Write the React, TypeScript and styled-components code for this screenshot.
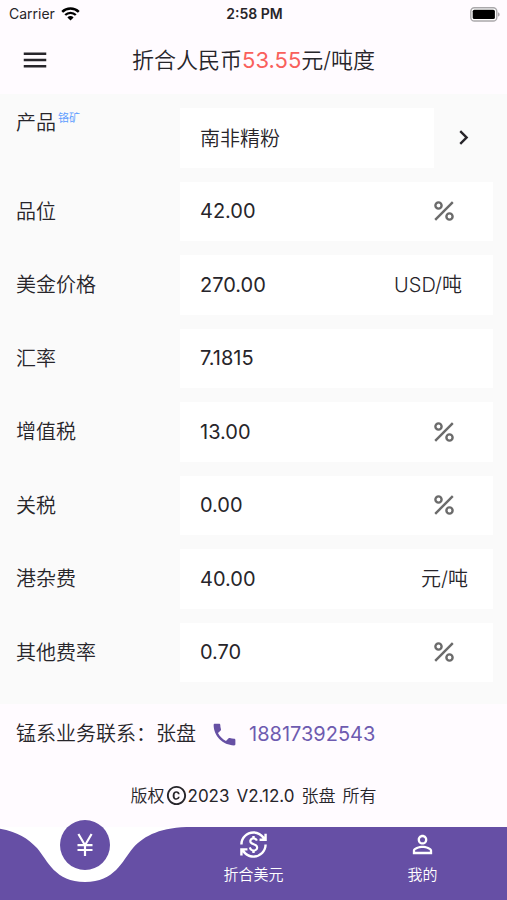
import React, { useState } from "react";
import styled, { createGlobalStyle } from "styled-components";
import {
  MdChevronRight,
  MdCopyright,
  MdCurrencyExchange,
  MdMenu,
  MdPersonOutline,
  MdPhone,
} from "react-icons/md";

const GlobalStyle = createGlobalStyle`
  *, *::before, *::after { box-sizing: border-box; }
  body {
    margin: 0;
    background: #fffbff;
    color: #27252a;
    font-family: Inter, "Noto Sans CJK SC", sans-serif;
    font-size: 20px;
    font-weight: 350;
    line-height: 28px;
  }
  button, input { font: inherit; color: inherit; }
  button { padding: 0; border: 0; background: none; cursor: pointer; }
`;

const Screen = styled.div`
  display: flex;
  flex-direction: column;
  min-height: 100vh;
`;

const StatusBar = styled.div`
  display: grid;
  grid-template-columns: 1fr auto 1fr;
  align-items: center;
  height: 26px;
  padding: 2px 7px 0 9px;
  font-family: Inter, sans-serif;
  font-size: 14px;
  font-weight: 400;
  line-height: 20px;
`;

const Carrier = styled.span`
  display: flex;
  align-items: center;
  gap: 6px;
`;

const Clock = styled.time`
  font-weight: 600;
`;

const BatteryIcon = styled.svg`
  justify-self: end;
`;

const AppBar = styled.header`
  display: grid;
  grid-template-columns: 48px 1fr 48px;
  align-items: center;
  height: 68px;
  padding: 0 11px;
`;

const IconButton = styled.button`
  display: flex;
  align-items: center;
  justify-content: center;
  height: 48px;
`;

const Title = styled.h1`
  margin: 0;
  font-size: 22px;
  font-weight: 350;
  line-height: 32px;
  text-align: center;
  white-space: nowrap;
`;

const Amount = styled.span`
  color: #f9605c;
  font-weight: 400;
`;

const Form = styled.form`
  flex: 1;
  display: grid;
  grid-auto-rows: 1fr;
  padding: 7px 14px 15px 16px;
  background: #fafafa;
`;

const Row = styled.div`
  display: grid;
  grid-template-columns: 164px 1fr;
  min-height: 60px;
  padding: 7px 0;
`;

const Label = styled.label<{ $top?: boolean }>`
  display: flex;
  align-self: ${(p) => (p.$top ? "start" : "center")};
  gap: 2px;
  padding-top: 1px;
`;

const Tag = styled.sup`
  color: #5b9bff;
  font-size: 11px;
  line-height: 18px;
`;

const Control = styled.div`
  display: flex;
  min-width: 0;
`;

const Field = styled.div<{ $inset: number }>`
  flex: 1;
  display: flex;
  align-items: center;
  min-width: 0;
  padding: 0 ${(p) => p.$inset}px 0 20px;
  background: #fff;
`;

const Input = styled.input`
  flex: 1;
  width: 100%;
  min-width: 0;
  height: 40px;
  padding: 0;
  border: 0;
  outline: 0;
  background: none;
`;

const NumberInput = styled(Input)`
  font-weight: 400;
`;

const Unit = styled.span`
  white-space: nowrap;
`;

const PickButton = styled(IconButton)`
  width: 59px;
  height: auto;
`;

const Contact = styled.section`
  display: flex;
  align-items: center;
  height: 60px;
  padding: 0 16px;
  white-space: nowrap;
`;

const PhoneLink = styled.a`
  display: flex;
  align-items: center;
  gap: 10px;
  margin-left: 14px;
  color: #6650a4;
  text-decoration: none;
`;

const PhoneNumber = styled.span`
  color: #6e5bb0;
  font-weight: 400;
`;

const Copyright = styled.footer`
  display: flex;
  align-items: center;
  justify-content: center;
  gap: 7px;
  height: 63px;
  font-size: 17px;
  white-space: nowrap;
`;

const Year = styled.span`
  display: flex;
  align-items: center;
`;

const Figures = styled.span`
  font-weight: 400;
`;

const Nav = styled.nav`
  display: grid;
  grid-template-columns: repeat(3, 1fr);
  height: 73px;
  overflow-x: clip;
  background: #664fa5;
  color: #fff;
`;

const NavItem = styled.button`
  position: relative;
  display: flex;
  flex-direction: column;
  align-items: center;
  gap: 6px;
  padding-top: 3px;
  font-size: 15px;
  line-height: 20px;
`;

const Notch = styled.svg`
  position: absolute;
  top: 0;
  left: 50%;
  margin-left: -110px;
`;

const ActiveDisc = styled.span`
  position: absolute;
  top: -7px;
  left: 50%;
  display: flex;
  align-items: center;
  justify-content: center;
  width: 50px;
  height: 50px;
  margin-left: -25px;
  border-radius: 50%;
  background: #664fa5;
`;

const WifiIcon = () => (
  <svg width="19" height="14" viewBox="0 0 19 14" fill="none" stroke="#000" aria-hidden="true">
    <path d="M1.2 4.9a11.8 11.8 0 0 1 16.6 0" strokeWidth="2.5" />
    <path d="M4.2 8a7.5 7.5 0 0 1 10.6 0" strokeWidth="2.3" />
    <path d="M9.5 13.6 6.4 10.4a4.4 4.4 0 0 1 6.2 0Z" fill="#000" stroke="none" />
  </svg>
);

const Battery = () => (
  <BatteryIcon width="30" height="15" viewBox="0 0 30 15" aria-hidden="true">
    <rect x=".8" y=".8" width="26" height="13.2" rx="3.6" fill="#fff" stroke="#aaa8ab" strokeWidth="1.4" />
    <rect x="2.7" y="2.7" width="22.2" height="9.4" rx="1.6" fill="#000" />
    <path d="M28 5.2c2.2.8 2.2 3.6 0 4.4Z" fill="#aaa8ab" />
  </BatteryIcon>
);

const PercentIcon = () => (
  <svg width="20" height="20" viewBox="0 0 20 20" fill="none" stroke="#6b6b6b" strokeWidth="2.4" role="img" aria-label="%">
    <circle cx="4.5" cy="4.5" r="3.1" />
    <circle cx="15.5" cy="15.5" r="3.1" />
    <path d="M1.2 18.8 18.8 1.2" />
  </svg>
);

const YenIcon = () => (
  <svg width="18" height="24" viewBox="0 0 18 24" fill="none" stroke="#fff" strokeWidth="2.2" aria-hidden="true">
    <path d="M2.4 1 9 12.2 15.6 1M9 12v11M1.5 12.2h15M1.5 17h15" />
  </svg>
);

type FieldSpec = {
  id: string;
  label: string;
  value: string;
  unit?: React.ReactNode;
  inset: number;
};

const fields: FieldSpec[] = [
  { id: "grade", label: "品位", value: "42.00", unit: <PercentIcon />, inset: 39 },
  { id: "price", label: "美金价格", value: "270.00", unit: "USD/吨", inset: 31 },
  { id: "rate", label: "汇率", value: "7.1815", inset: 20 },
  { id: "vat", label: "增值税", value: "13.00", unit: <PercentIcon />, inset: 39 },
  { id: "duty", label: "关税", value: "0.00", unit: <PercentIcon />, inset: 39 },
  { id: "port", label: "港杂费", value: "40.00", unit: "元/吨", inset: 25 },
  { id: "other", label: "其他费率", value: "0.70", unit: <PercentIcon />, inset: 39 },
];

export default function App() {
  const [product, setProduct] = useState("南非精粉");
  const [values, setValues] = useState<Record<string, string>>(
    Object.fromEntries(fields.map((f) => [f.id, f.value]))
  );

  return (
    <Screen>
      <GlobalStyle />
      <StatusBar>
        <Carrier>
          Carrier
          <WifiIcon />
        </Carrier>
        <Clock>2:58 PM</Clock>
        <Battery />
      </StatusBar>
      <AppBar>
        <IconButton type="button" aria-label="菜单">
          <MdMenu size={30} />
        </IconButton>
        <Title>
          折合人民币<Amount>53.55</Amount>元/吨度
        </Title>
      </AppBar>
      <Form onSubmit={(e) => e.preventDefault()}>
        <Row>
          <Label htmlFor="product" $top>
            产品<Tag>铬矿</Tag>
          </Label>
          <Control>
            <Field $inset={20}>
              <Input id="product" value={product} onChange={(e) => setProduct(e.target.value)} />
            </Field>
            <PickButton type="button" aria-label="选择产品">
              <MdChevronRight size={29} />
            </PickButton>
          </Control>
        </Row>
        {fields.map((f) => (
          <Row key={f.id}>
            <Label htmlFor={f.id}>{f.label}</Label>
            <Control>
              <Field $inset={f.inset}>
                <NumberInput
                  id={f.id}
                  inputMode="decimal"
                  value={values[f.id]}
                  onChange={(e) => setValues({ ...values, [f.id]: e.target.value })}
                />
                {typeof f.unit === "string" ? <Unit>{f.unit}</Unit> : f.unit}
              </Field>
            </Control>
          </Row>
        ))}
      </Form>
      <Contact>
        锰系业务联系：张盘
        <PhoneLink href="tel:18817392543">
          <MdPhone size={29} />
          <PhoneNumber>18817392543</PhoneNumber>
        </PhoneLink>
      </Contact>
      <Copyright>
        <Year>
          版权
          <MdCopyright size={23} />
          <Figures>2023</Figures>
        </Year>
        <Figures>V2.12.0</Figures>
        <span>张盘</span>
        <span>所有</span>
      </Copyright>
      <Nav>
        <NavItem type="button" aria-label="折合人民币" aria-current="page">
          <Notch width="220" height="56" viewBox="0 0 220 56" aria-hidden="true">
            <path
              d="M3 0C34 0 50 8 62 21C73 34 80 55 110 55S147 34 158 21C170 8 186 0 217 0Z"
              fill="#fff"
            />
          </Notch>
          <ActiveDisc>
            <YenIcon />
          </ActiveDisc>
        </NavItem>
        <NavItem type="button">
          <MdCurrencyExchange size={29} />
          折合美元
        </NavItem>
        <NavItem type="button">
          <MdPersonOutline size={29} />
          我的
        </NavItem>
      </Nav>
    </Screen>
  );
}
